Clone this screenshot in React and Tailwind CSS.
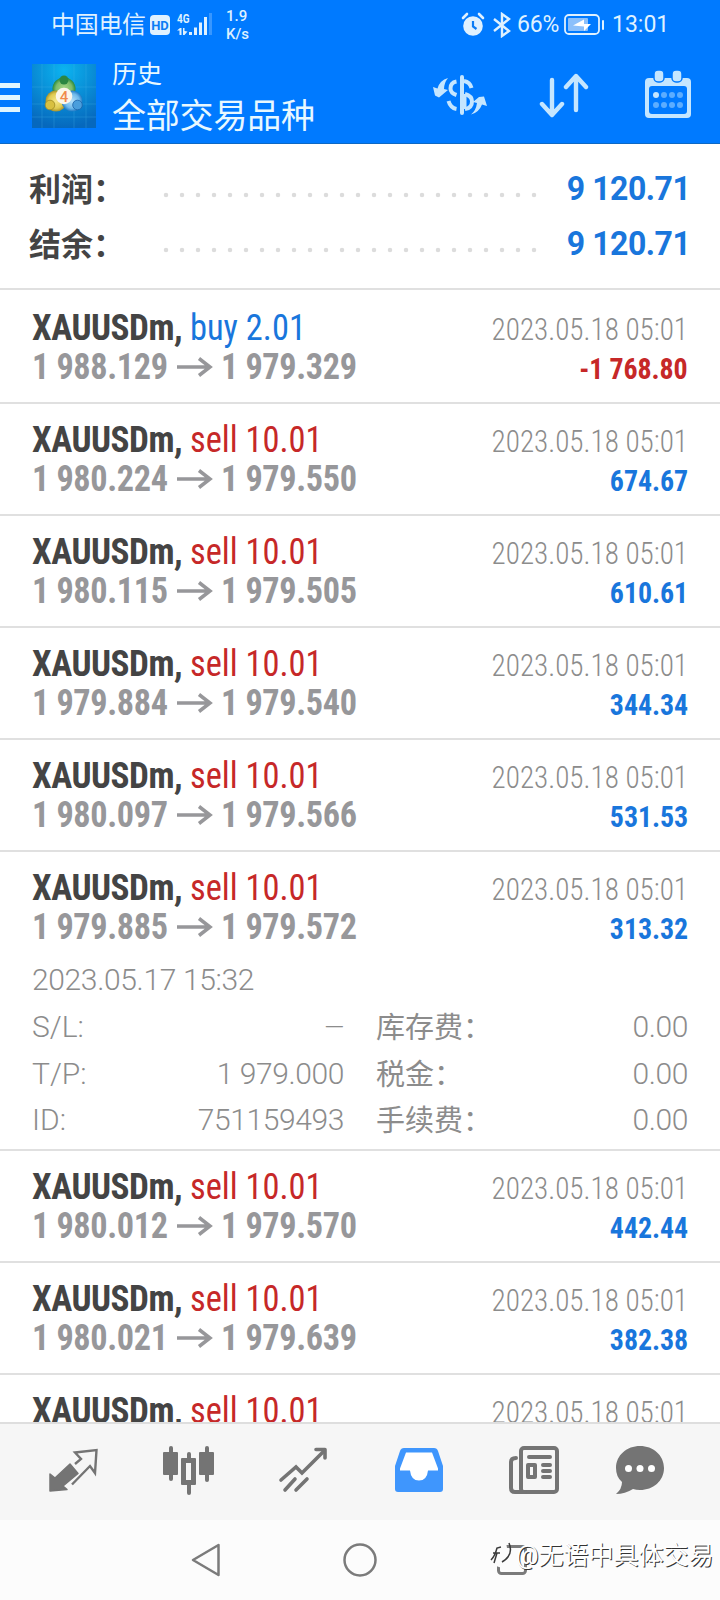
import React from "react";

const deals = [
  { side: "buy 2.01", from: "1 988.129", to: "1 979.329", profit: "-1 768.80" },
  { side: "sell 10.01", from: "1 980.224", to: "1 979.550", profit: "674.67" },
  { side: "sell 10.01", from: "1 980.115", to: "1 979.505", profit: "610.61" },
  { side: "sell 10.01", from: "1 979.884", to: "1 979.540", profit: "344.34" },
  { side: "sell 10.01", from: "1 980.097", to: "1 979.566", profit: "531.53" },
  { side: "sell 10.01", from: "1 979.885", to: "1 979.572", profit: "313.32", open: true },
  { side: "sell 10.01", from: "1 980.012", to: "1 979.570", profit: "442.44" },
  { side: "sell 10.01", from: "1 980.021", to: "1 979.639", profit: "382.38" },
  { side: "sell 10.01" },
];

function StatusBar() {
  return (
    <div className="flex h-[50px] items-center pl-[51px] text-[#dff1ff]">
      <span className="w-[97px] whitespace-nowrap text-[24px] leading-[50px] tracking-[-0.3px]">中国电信</span>
      <span className="ml-[2px] flex h-[20px] w-[20px] items-center justify-center rounded-[4px] bg-[#dff1ff] text-[13px] font-bold leading-none text-[#0a7cf5]">
        HD
      </span>
      <svg className="ml-[7px] h-[26px] w-[38px]" viewBox="0 0 38 26" fill="#dff1ff">
        <text x="0" y="11" fontSize="13" fontFamily="Roboto" fontWeight="700" textLength="12.500" lengthAdjust="spacingAndGlyphs">4G</text>
        <path d="M0 18.500l3-2.500h1.500v7H2.500v-4.500zM6 16h1.500v3l3 .5-3 3.500H6z" />
        <rect x="12" y="20" width="3" height="3" />
        <rect x="17" y="15.500" width="3" height="7.500" />
        <rect x="22" y="10.500" width="3" height="12.500" />
        <rect x="27" y="5" width="3" height="18" />
        <rect x="32" y="1" width="3" height="22" opacity=".25" />
      </svg>
      <div className="ml-[11px] flex w-[30px] flex-col text-[15px] font-medium leading-[18px]">
        <span>1.9</span>
        <span>K/s</span>
      </div>
      <svg className="ml-[205px] h-[26px] w-[24px]" viewBox="0 0 24 26" fill="#dff1ff">
        <circle cx="12" cy="14" r="9.800" />
        <path d="M2 6l4-4M22 6l-4-4" stroke="#dff1ff" strokeWidth="2.600" strokeLinecap="round" />
        <path d="M12 9v5.500l3.500 2.500" stroke="#0a7cf5" strokeWidth="2.200" fill="none" />
      </svg>
      <svg className="ml-[7px] h-[26px] w-[20px]" viewBox="0 0 20 26" fill="none" stroke="#dff1ff" strokeWidth="2.400">
        <path d="M2 7l15 12-7 5V2l7 5L2 19" />
      </svg>
      <span className="ml-[5px] w-[43px] whitespace-nowrap text-[23px] leading-[50px] tracking-[-0.2px] [font-weight:450]">66%</span>
      <svg className="ml-[4px] h-[24px] w-[42px]" viewBox="0 0 42 24">
        <rect x="1" y="2" width="34" height="19" rx="4" fill="none" stroke="#dff1ff" strokeWidth="1.800" />
        <rect x="4" y="5" width="20" height="13" rx="1" fill="#8cc0fb" />
        <path d="M9 12.500l11-6v4.500h7l-7 7v-4.500z" fill="#fff" />
        <rect x="38" y="7" width="2" height="10" rx="1" fill="#dff1ff" />
      </svg>
      <span className="ml-[6px] whitespace-nowrap text-[23px] [font-weight:450]">13:01</span>
    </div>
  );
}

function Logo() {
  return (
    <svg className="ml-[12px] h-[64px] w-[64px]" viewBox="0 0 64 64">
      <defs>
        <radialGradient id="sky" cx=".5" cy=".1" r=".9">
          <stop offset="0" stopColor="#0cb4f0" />
          <stop offset="1" stopColor="#0668bd" />
        </radialGradient>
        <radialGradient id="green"><stop offset="0" stopColor="#a9d98a" /><stop offset=".7" stopColor="#7dbb6a" /><stop offset="1" stopColor="#2b8a3c" /></radialGradient>
        <radialGradient id="gold"><stop offset="0" stopColor="#f6e88a" /><stop offset=".7" stopColor="#dfcb52" /><stop offset="1" stopColor="#a8922a" /></radialGradient>
        <radialGradient id="blue"><stop offset="0" stopColor="#b5e0fa" /><stop offset=".7" stopColor="#6db8ea" /><stop offset="1" stopColor="#2079c4" /></radialGradient>
      </defs>
      <rect width="64" height="64" fill="url(#sky)" />
      <path d="M0 23h64M0 40h64M0 53h64M10 0v64M22 0v64M42 0v64M54 0v64" stroke="#4ab8ef" strokeWidth=".6" opacity=".45" />
      <circle cx="32" cy="25" r="11.500" fill="url(#green)" />
      <circle cx="24" cy="37" r="10.500" fill="url(#gold)" />
      <circle cx="40" cy="37" r="10.500" fill="url(#blue)" />
      <circle cx="32" cy="16" r="4.500" fill="#2c8642" />
      <circle cx="18" cy="41" r="4.800" fill="#d8c040" stroke="#a08c24" strokeWidth=".8" />
      <circle cx="45.500" cy="41" r="4.800" fill="#4a9edc" stroke="#1c62a8" strokeWidth=".8" />
      <circle cx="32" cy="32" r="8.300" fill="#fbf6ea" />
      <text x="32" y="37.500" textAnchor="middle" fontSize="15" fontWeight="500" fontFamily="Roboto" fill="#f08a4c">4</text>
    </svg>
  );
}

function Header() {
  return (
    <header className="h-[144px] border-b border-[#0d68c4] bg-[#007aff]">
      <StatusBar />
      <div className="flex h-[93px] items-start">
        <div className="mt-[33px] flex w-[20px] flex-col gap-[7px]">
          <div className="h-[5px] bg-[#dff5ff]" />
          <div className="h-[5px] bg-[#dff5ff]" />
          <div className="h-[5px] bg-[#dff5ff]" />
        </div>
        <div className="mt-[14px]"><Logo /></div>
        <div className="ml-[16px] mt-[8px] flex w-[220px] flex-col whitespace-nowrap text-[#e8f8ff]">
          <span className="text-[25px] leading-[34px]">历史</span>
          <span className="mt-px text-[34px] leading-[46px] tracking-[-0.2px]">全部交易品种</span>
        </div>
        <svg className="ml-[101px] mt-[22px] h-[46px] w-[54px]" viewBox="0 0 54 46" fill="none" stroke="#c5e6ff" strokeWidth="4">
          <path d="M29 5v36" strokeLinecap="round" />
          <path d="M23.500 9.500q-6 1-6 7 0 4.500 6 6.500M31 9q6 1 7.500 7M15.500 29q2 7 8 8M32 22q7 2 7 7.500 0 6.500-7 7.500" />
          <path d="M32 22v15" strokeWidth="3" />
          <path d="M0 15l4.500 1.500q2-8 10.500-10.500-4 5-4 11l4 1-9 7.500-4-2zM54 34l-5-1.500q-3 8-11 10 5-4 6-11.500l-4-1 6-5 5-.5z" fill="#c5e6ff" stroke="none" />
        </svg>
        <svg className="ml-[50px] mt-[22px] h-[48px] w-[52px]" viewBox="0 0 52 48" fill="none" stroke="#c5e6ff" strokeWidth="4.400" strokeLinecap="round" strokeLinejoin="round">
          <path d="M15 8v34M5 32l10 11 10-11M39 38V5M29 15L39 4l10 11" />
        </svg>
        <svg className="ml-[55px] mt-[20px] h-[48px] w-[48px]" viewBox="0 0 48 48">
          <rect x="1" y="8" width="46" height="40" rx="4" fill="#c5e6ff" />
          <rect x="5" y="16" width="38" height="28" rx="3" fill="#007aff" />
          <rect x="10" y="0" width="10" height="12" rx="4" fill="#c5e6ff" stroke="#007aff" strokeWidth="1.500" />
          <rect x="28" y="0" width="10" height="12" rx="4" fill="#c5e6ff" stroke="#007aff" strokeWidth="1.500" />
          <circle cx="12" cy="25" r="3" fill="#c5e6ff" />
          <g fill="#5cadff">
            <circle cx="20" cy="25" r="3" /><circle cx="28" cy="25" r="3" /><circle cx="36" cy="25" r="3" />
            <circle cx="12" cy="35" r="3" /><circle cx="20" cy="35" r="3" /><circle cx="28" cy="35" r="3" /><circle cx="36" cy="35" r="3" />
          </g>
        </svg>
      </div>
    </header>
  );
}

function SummaryRow({ label }) {
  return (
    <div className="flex h-[55px] items-center pl-[29px] pr-[30px] text-[32px] font-bold">
      <span className="w-[133px] whitespace-nowrap text-[#444]">{label}</span>
      <svg className="mt-[11px] h-[6px] w-[376px]" viewBox="0 0 376 6">
        <path d="M4 3h372" stroke="#dcdcdc" strokeWidth="4.500" strokeLinecap="round" strokeDasharray="0.01 15.99" />
      </svg>
      <span className="mb-[2px] ml-auto origin-right scale-x-[0.97] whitespace-nowrap text-[33px] tracking-[-0.5px] text-[#1976dc]">9 120.71</span>
    </div>
  );
}

function DetailRow({ a, b, c }) {
  return (
    <div className="flex h-[46.500px] items-center text-[30px] leading-[46px] tracking-[-0.4px] text-[#8c8c8c] [font-weight:350]">
      <span className="w-[80px] tracking-normal">{a}</span>
      <span className={`w-[232px] text-right ${b === "—" ? "text-[26px]" : ""}`}>{b}</span>
      <span className="ml-[32px] mt-[2px] whitespace-nowrap text-[29px] font-normal tracking-normal">{c}</span>
      <span className="ml-auto">0.00</span>
    </div>
  );
}

function Deal({ deal, first }) {
  const buy = deal.side.startsWith("buy");
  const loss = deal.profit?.startsWith("-");
  return (
    <div className={`shrink-0 border-b-2 border-[#e0e0e0] pl-[32px] pr-[32px] ${first ? "h-[114px] pt-[18px]" : deal.open ? "h-[299px] pt-[16px]" : "h-[112px] pt-[16px]"}`}>
      <div className="flex h-[39px] items-baseline whitespace-nowrap text-[37px] leading-[39px] [font-stretch:75%]">
        <span className="w-[158px] origin-left scale-x-[0.95] font-bold tracking-[-0.5px] text-[#444]">XAUUSDm,</span>
        <span className={`origin-left scale-x-[0.93] ${buy ? "text-[#1976dc]" : "text-[#c62828]"}`}>{deal.side}</span>
        <span className="ml-auto origin-right scale-x-[0.94] text-[31px] text-[#8c8c8c] [font-weight:360]">2023.05.18 05:01</span>
      </div>
      {deal.from && (
        <div className="flex h-[39px] items-baseline whitespace-nowrap text-[37px] font-bold leading-[39px] tracking-[-0.4px] text-[#97979a] [font-stretch:75%]">
          <span className="w-[145px] origin-left scale-x-[0.925]">{deal.from}</span>
          <svg className="h-[20px] w-[36px] overflow-visible" viewBox="0 2 36 20" fill="none" stroke="#97979a" strokeWidth="3.500">
            <path d="M0 10h33M22 1.500l11 8.500-11 8.500" />
          </svg>
          <span className="ml-[8px] w-[150px] origin-left scale-x-[0.925]">{deal.to}</span>
          <span className={`ml-auto origin-right scale-x-[0.93] text-[30px] tracking-[-0.1px] ${loss ? "text-[#c62828]" : "text-[#1976dc]"}`}>{deal.profit}</span>
        </div>
      )}
      {deal.open && (
        <div className="flex flex-col pt-[5px]">
          <div className="mb-[2px] flex h-[51px] items-end text-[30px] leading-[44px] tracking-[-0.35px] text-[#8c8c8c] [font-weight:350]">2023.05.17 15:32</div>
          <DetailRow a="S/L:" b="—" c="库存费：" />
          <DetailRow a="T/P:" b="1 979.000" c="税金：" />
          <DetailRow a="ID:" b="751159493" c="手续费：" />
        </div>
      )}
    </div>
  );
}

function TabBar() {
  return (
    <nav className="flex h-[98px] items-start border-t-2 border-[#dedede] bg-[#f6f6f6] pl-[48px] pt-[22px]">
      <svg className="h-[52px] w-[52px]" viewBox="0 0 52 52">
        <path d="M2 45V28l5 4L22 18l8 9.500L15 40l4 3.500z" fill="#747474" stroke="#747474" strokeWidth="1.500" strokeLinejoin="round" />
        <path d="M27 18l6-5-6-6.500L48.500 4 47 27l-5-7-18 18.500" fill="none" stroke="#747474" strokeWidth="2.400" />
      </svg>
      <svg className="ml-[62px] h-[52px] w-[54px]" viewBox="0 0 54 52" fill="#747474">
        <rect x="1" y="6" width="15" height="23" rx="1" /><rect x="7" y="0" width="4" height="35" rx="2" />
        <rect x="37" y="6" width="15" height="23" rx="1" /><rect x="43" y="0" width="4" height="36" rx="2" />
        <rect x="25" y="6" width="4" height="43" rx="2" /><rect x="19" y="12" width="15" height="27" rx="1" />
        <rect x="24" y="17" width="5" height="17" fill="#f6f6f6" />
      </svg>
      <svg className="ml-[62px] h-[52px] w-[52px]" viewBox="0 0 52 52" fill="none" stroke="#747474" strokeWidth="3.600" strokeLinecap="round">
        <path d="M3 34l15-13 6 6L46 5M7 44l10-11M18 44l11-11" />
        <path d="M38 3.500h9V12" strokeLinejoin="round" />
      </svg>
      <svg className="ml-[64px] h-[52px] w-[50px]" viewBox="0 0 50 52">
        <path d="M10 2h30q3 0 4 3l5 15v23q0 3-3 3H4q-3 0-3-3V20L6 5q1-3 4-3z" fill="#3f96fd" />
        <path d="M12 6.500h26l6 16v2H34q-1 10-9 10t-9-10H6v-2z" fill="#fff" />
      </svg>
      <svg className="ml-[64px] h-[52px] w-[52px]" viewBox="0 0 52 52" fill="none" stroke="#747474" strokeWidth="4">
        <rect x="13" y="2" width="36" height="44" rx="3" />
        <path d="M8 12q-5 0-5 4v26q0 4 4 4h10M21 11h21M35 19h7M35 25h7M35 31h7" strokeLinecap="round" />
        <rect x="20" y="19" width="7" height="12" strokeLinejoin="round" />
      </svg>
      <svg className="ml-[55px] h-[52px] w-[52px]" viewBox="0 0 52 52">
        <path d="M25 0c13 0 24 9 24 22S38 44 25 44q-4 0-7-1-8 5-17 5 6-5 6-12Q1 31 1 22C1 9 12 0 25 0z" fill="#747474" />
        <circle cx="13.500" cy="22.500" r="3.500" fill="#fff" /><circle cx="25" cy="22.500" r="3.500" fill="#fff" /><circle cx="36.500" cy="22.500" r="3.500" fill="#fff" />
      </svg>
    </nav>
  );
}

function SystemBar() {
  return (
    <div className="relative flex h-[80px] items-start bg-[#fcfcfc] pl-[190px] pt-[22px]">
      <svg className="h-[36px] w-[32px]" viewBox="0 0 32 36" fill="none" stroke="#7b7b7b" strokeWidth="2.500" strokeLinejoin="round">
        <path d="M28.500 3v30L3 18z" />
      </svg>
      <svg className="ml-[120px] h-[36px] w-[36px]" viewBox="0 0 36 36" fill="none" stroke="#7b7b7b" strokeWidth="2.500">
        <circle cx="18" cy="18" r="15.500" />
      </svg>
      <svg className="ml-[117px] h-[36px] w-[36px]" viewBox="0 0 36 36" fill="none" stroke="#7b7b7b" strokeWidth="3">
        <rect x="3.500" y="4.500" width="27" height="27" rx="3" />
      </svg>
      <div className="absolute left-[488px] top-[18px] flex items-center whitespace-nowrap text-[25px] leading-[36px] text-white [text-shadow:1px_1px_0px_#333]">
        <svg className="h-[36px] w-[28px]" viewBox="0 0 28 36" fill="none">
          <path d="M8 4h10l4 24-8 2-9-3z" fill="#fcfcfc" />
          <path d="M3 22q4-4 6-12l4-1M5 15h7M9 15l-3 10M21 5q5 12-7 19" stroke="#3a3a3a" strokeWidth="1.500" />
        </svg>
        <span>@无语中具体交易</span>
      </div>
    </div>
  );
}

export default function App() {
  return (
    <div className="flex h-[1600px] w-[720px] flex-col overflow-hidden bg-white font-['Roboto','Noto_Sans_CJK_SC',sans-serif]">
      <Header />
      <section className="h-[146px] border-b-2 border-[#e0e0e0] pt-[18px]">
        <SummaryRow label="利润：" />
        <SummaryRow label="结余：" />
      </section>
      <main className="flex h-[1132px] flex-col overflow-hidden">
        {deals.map((deal, i) => (
          <Deal key={i} deal={deal} first={i === 0} />
        ))}
      </main>
      <TabBar />
      <SystemBar />
    </div>
  );
}
